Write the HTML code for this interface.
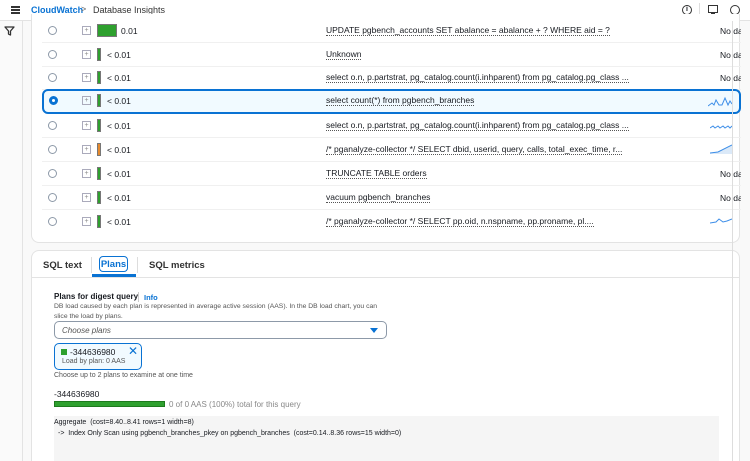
<!DOCTYPE html>
<html><head><style>
*{box-sizing:border-box;margin:0;padding:0}
html,body{width:750px;height:461px;overflow:hidden}
body{background:#f9f9f9;font-family:"Liberation Sans",sans-serif;color:#16191f;position:relative;font-size:8px}
span{white-space:nowrap}
.top{position:absolute;left:0;top:0;width:750px;height:21px;background:#fff;border-bottom:1px solid #e3e3e3}
.side{position:absolute;left:0;top:21px;width:23px;height:440px;background:#fafafa;border-right:1px solid #e3e3e3}
.panel{position:absolute;left:31px;background:#fff;border:1px solid #e3e3e3;border-radius:8px;overflow:hidden}
.row{position:absolute;left:42px;width:699px;height:24px;border-bottom:1px solid #f0f0f0;overflow:hidden}
.row.sel{background:#f1faff;border:2px solid #0972d3;border-radius:6px;height:25px;width:699px}
.radio{position:absolute;left:6px;top:7px;width:9px;height:9px;border:1px solid #8d99a8;border-radius:50%;background:#fff}
.sel .radio{border:3px solid #0972d3;left:5px;top:5px}
.plus{position:absolute;left:40px;top:7px;width:9px;height:9px;border:1px solid #aab;font-size:7px;line-height:7px;text-align:center;color:#888}
.bar{position:absolute;left:55px;top:5px;width:4px;height:13px;background:#2ea02e;border:1px solid #777}
.val{position:absolute;top:7px;font-size:8.5px}
.sql{position:absolute;left:284px;top:7px;font-size:8.5px;border-bottom:1px dotted #555;line-height:9px}
.nd{position:absolute;left:678px;top:7px;font-size:8.5px}
</style></head><body>
<div class="top">
<div style="position:absolute;left:11px;top:6px;width:9px;height:1.5px;background:#333;box-shadow:0 3px 0 #333,0 6px 0 #333"></div>
<span style="position:absolute;left:31px;top:5px;font-size:9px;color:#0972d3;font-weight:bold;border-bottom:1px dotted #0972d3">CloudWatch</span>
<span style="position:absolute;left:81px;top:4px;font-size:9px;color:#666">&gt;</span>
<span style="position:absolute;left:93px;top:5px;font-size:9px;color:#333">Database Insights</span>
<div style="position:absolute;left:682px;top:5px;width:10px;height:10px;border:1.3px solid #333;border-radius:50%;font-size:7px;text-align:center;line-height:8px;font-weight:bold">i</div>
<div style="position:absolute;left:699px;top:3px;width:1px;height:14px;background:#ddd"></div>
<div style="position:absolute;left:708px;top:5px;width:10px;height:8px;border:1.3px solid #333"></div>
<div style="position:absolute;left:711px;top:13px;width:4px;height:2px;background:#333"></div>
<div style="position:absolute;left:730px;top:5px;width:10px;height:10px;border:1.3px solid #333;border-radius:50%"></div>
</div>
<div class="side"><svg style="position:absolute;left:4px;top:5px" width="11" height="10"><path d="M1 1 H10 L6.5 5 V9 L4.5 8 V5 Z" fill="none" stroke="#333" stroke-width="1.3" stroke-linejoin="round"/></svg></div>
<div class="panel" style="top:14px;width:709px;height:229px;border-top:none;border-radius:0 0 8px 8px"></div>

<div class="row" style="top:19px"><div class="radio"></div><div class="plus">+</div><div class="bar" style="width:20px"></div><span class="val" style="left:79px">0.01</span><span class="sql">UPDATE pgbench_accounts SET abalance = abalance + ? WHERE aid = ?</span><span class="nd">No da</span></div>
<div class="row" style="top:43px"><div class="radio"></div><div class="plus">+</div><div class="bar"></div><span class="val" style="left:65px">&lt; 0.01</span><span class="sql">Unknown</span><span class="nd">No da</span></div>
<div class="row" style="top:66px"><div class="radio"></div><div class="plus">+</div><div class="bar"></div><span class="val" style="left:65px">&lt; 0.01</span><span class="sql">select o.n, p.partstrat, pg_catalog.count(i.inhparent) from pg_catalog.pg_class ...</span><span class="nd">No da</span></div>
<div class="row sel" style="top:89px"><div class="radio"></div><div class="plus" style="left:38px;top:5px">+</div><div class="bar" style="left:53px;top:3px"></div><span class="val" style="left:63px;top:5px">&lt; 0.01</span><span class="sql" style="left:282px;top:5px">select count(*) from pgbench_branches</span><svg style="position:absolute;left:664px;top:4px" width="24" height="12"><path d="M0 11 L4 8 L6 10 L8 5 L11 10 L14 10 L17 3 L20 10 L22 6 L24 9" fill="none" stroke="#3d8ee8" stroke-width="1"/></svg></div>
<div class="row" style="top:114px"><div class="radio"></div><div class="plus">+</div><div class="bar"></div><span class="val" style="left:65px">&lt; 0.01</span><span class="sql">select o.n, p.partstrat, pg_catalog.count(i.inhparent) from pg_catalog.pg_class ...</span><svg style="position:absolute;left:668px;top:8px" width="22" height="8"><path d="M0 6 L3 4 L5 6 L8 4 L10 6 L13 4 L15 6 L18 4 L20 6 L22 4" fill="none" stroke="#3d8ee8"/></svg></div>
<div class="row" style="top:138px"><div class="radio"></div><div class="plus">+</div><div class="bar" style="background:#e68a2e"></div><span class="val" style="left:65px">&lt; 0.01</span><span class="sql">/* pganalyze-collector */ SELECT dbid, userid, query, calls, total_exec_time, r...</span><svg style="position:absolute;left:668px;top:4px" width="22" height="12"><path d="M0 11 L8 10 L22 3 L22 12 L0 12Z" fill="#dbe9f8"/><path d="M0 11 L8 10 L22 3" fill="none" stroke="#3d8ee8"/></svg></div>
<div class="row" style="top:162px"><div class="radio"></div><div class="plus">+</div><div class="bar"></div><span class="val" style="left:65px">&lt; 0.01</span><span class="sql">TRUNCATE TABLE orders</span><span class="nd">No da</span></div>
<div class="row" style="top:186px"><div class="radio"></div><div class="plus">+</div><div class="bar"></div><span class="val" style="left:65px">&lt; 0.01</span><span class="sql">vacuum pgbench_branches</span><span class="nd">No da</span></div>
<div class="row" style="top:210px;border-bottom:none"><div class="radio"></div><div class="plus">+</div><div class="bar"></div><span class="val" style="left:65px">&lt; 0.01</span><span class="sql">/* pganalyze-collector */ SELECT pp.oid, n.nspname, pp.proname, pl....</span><svg style="position:absolute;left:668px;top:6px" width="22" height="8"><path d="M0 7 L6 6 L9 3 L13 6 L17 5 L22 3" fill="none" stroke="#3d8ee8"/></svg></div>

<div class="panel" style="top:250px;width:709px;height:220px">
<div style="position:absolute;left:0;right:0;top:26px;height:1px;background:#e3e3e3"></div>
<span style="position:absolute;left:11px;top:9px;font-size:9.5px;font-weight:bold;color:#333">SQL text</span>
<div style="position:absolute;left:59px;top:6px;width:1px;height:16px;background:#ddd"></div>
<div style="position:absolute;left:67px;top:5px;width:29px;height:16px;border:1.5px solid #0972d3;border-radius:4px;font-size:9.5px;font-weight:bold;color:#0972d3;display:flex;align-items:center;justify-content:center">Plans</div>
<div style="position:absolute;left:60px;top:23px;width:44px;height:2.5px;background:#0972d3"></div>
<div style="position:absolute;left:105px;top:6px;width:1px;height:16px;background:#ddd"></div>
<span style="position:absolute;left:117px;top:9px;font-size:9.5px;font-weight:bold;color:#333">SQL metrics</span>
<span style="position:absolute;left:22px;top:41px;font-size:8px;font-weight:bold">Plans for digest query</span>
<div style="position:absolute;left:106px;top:41px;width:1px;height:10px;background:#ccc"></div>
<span style="position:absolute;left:112px;top:42px;font-size:7.5px;font-weight:bold;color:#0972d3">Info</span>
<div style="position:absolute;left:22px;top:51px;width:330px;font-size:6.8px;color:#555;line-height:10px">DB load caused by each plan is represented in average active session (AAS). In the DB load chart, you can slice the load by plans.</div>
<div style="position:absolute;left:22px;top:70px;width:333px;height:18px;border:1px solid #8d99a8;border-radius:5px"><span style="position:absolute;left:7px;top:4px;font-size:8px;font-style:italic;color:#555">Choose plans</span><div style="position:absolute;right:8px;top:6px;border-left:4px solid transparent;border-right:4px solid transparent;border-top:5px solid #0972d3"></div></div>
<div style="position:absolute;left:22px;top:92px;width:88px;height:27px;border:1.5px solid #0972d3;border-radius:5px;background:#f1faff">
<div style="position:absolute;left:6px;top:5px;width:6px;height:6px;background:#2ea02e"></div>
<span style="position:absolute;left:15px;top:3px;font-size:8.5px">-344636980</span>
<span style="position:absolute;left:73px;top:0px;font-size:12px;color:#0972d3">✕</span>
<span style="position:absolute;left:7px;top:14px;font-size:7px;color:#555">Load by plan: 0 AAS</span></div>
<span style="position:absolute;left:22px;top:121px;font-size:7px;color:#555">Choose up to 2 plans to examine at one time</span>
<span style="position:absolute;left:22px;top:138px;font-size:8.5px">-344636980</span>
<div style="position:absolute;left:22px;top:150px;width:111px;height:6px;background:#2ea02e;border:1px solid #1d7a1d"></div>
<span style="position:absolute;left:137px;top:149px;font-size:8px;color:#888">0 of 0 AAS (100%) total for this query</span>
<div style="position:absolute;left:22px;top:165px;width:665px;height:60px;background:#f5f5f5"></div>
<span style="position:absolute;left:22px;top:168px;font-size:7px">Aggregate&nbsp; (cost=8.40..8.41 rows=1 width=8)</span>
<span style="position:absolute;left:26px;top:179px;font-size:7px;white-space:pre">-&gt;  Index Only Scan using pgbench_branches_pkey on pgbench_branches  (cost=0.14..8.36 rows=15 width=0)</span>
</div>
<div style="position:absolute;left:732px;top:21px;width:1px;height:440px;background:#ddd"></div>
</body></html>
